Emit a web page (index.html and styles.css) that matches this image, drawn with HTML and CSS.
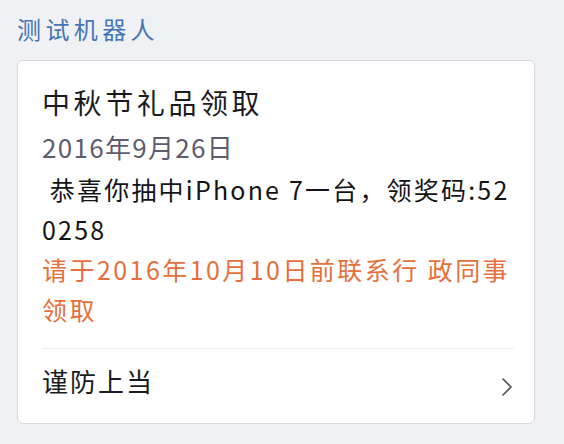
FILE: index.html
```html
<!doctype html>
<html lang="zh-CN">
<head>
<meta charset="UTF-8">
<title>测试机器人</title>
<link rel="stylesheet" href="styles.css">
</head>
<body>
	<div class="page">
		<div class="sender">测试机器人</div>
		<div class="card">
			<div class="card_title">中秋节礼品领取</div>
			<div class="card_date">2016年9月26日</div>
			<div class="card_text">&nbsp;恭喜你抽中iPhone 7一台，领奖码:520258</div>
			<div class="card_note">请于2016年10月10日前联系行 政同事领取</div>
			<div class="card_foot">
				<span>谨防上当</span>
				<svg class="arrow" width="12" height="20" viewBox="0 0 12 20">
					<polyline points="1.5,1.5 10,10 1.5,18.5" fill="none" stroke="#555" stroke-width="1.6"/>
				</svg>
			</div>
		</div>
	</div>
</body>
</html>
```

FILE: styles.css
```css
html,body{
	margin:0;
	padding:0;
	background:#eff1f4;
}
.page{
	padding:12px 0 0 17px;
	font-family:"Noto Sans CJK SC","Noto Sans",sans-serif;
}
.sender{
	height:34px;
	line-height:34px;
	font-size:24px;
	letter-spacing:4.4px;
	color:#4576b3;
}
.card{
	width:518px;
	box-sizing:border-box;
	margin-top:14px;
	padding:19px 20px 12px 24px;
	background:#fff;
	border:1px solid #d8dbe0;
	border-radius:6px;
}
.card_title{
	line-height:44px;
	font-size:28px;
	letter-spacing:3.6px;
	color:#1b1b1f;
}
.card_date{
	margin-top:3px;
	line-height:40px;
	font-size:26px;
	letter-spacing:1.3px;
	color:#5e5d6e;
}
.card_text{
	margin-top:2px;
	line-height:40px;
	font-size:25px;
	letter-spacing:2.2px;
	color:#141416;
	word-break:break-all;
}
.card_note{
	line-height:40px;
	font-size:25px;
	letter-spacing:2.45px;
	color:#e66f3c;
}
.card_foot{
	margin-top:19px;
	height:62px;
	border-top:1px solid #e9ebee;
	display:flex;
	align-items:center;
	justify-content:space-between;
	font-size:26px;
	letter-spacing:2px;
	color:#1b1b1f;
}
.arrow{
	margin-top:14px;
	margin-right:1px;
}
```
